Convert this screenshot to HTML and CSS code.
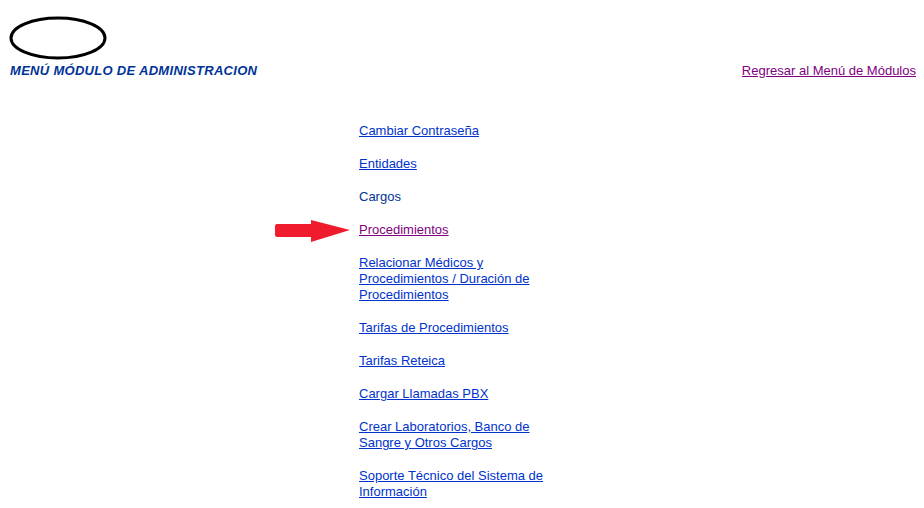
FILE: index.html
```html
<!DOCTYPE html>
<html lang="es">
<head>
    <meta charset="UTF-8">
    <title>Menú Módulo de Administración</title>
    <link rel="stylesheet" href="styles.css">
</head>
<body>
    <div class="header">
        <div class="brand">
            <svg class="logo" width="100" height="46" viewBox="0 0 100 46">
                <ellipse cx="49" cy="22" rx="47" ry="20" fill="none" stroke="#000" stroke-width="3"/>
            </svg>
            <div class="title">MENÚ MÓDULO DE ADMINISTRACION</div>
        </div>
        <a class="back visited" href="#">Regresar al Menú de Módulos</a>
    </div>
    <div class="menu">
        <a class="item" href="#">Cambiar Contraseña</a>
        <a class="item" href="#">Entidades</a>
        <span class="item plain">Cargos</span>
        <div class="current">
            <svg class="arrow" width="76" height="24" viewBox="0 0 76 24">
                <path d="M2 5 L36 5 L36 1 L75 11 L36 23 L36 18 L2 18 Q0 18 0 16 L0 7 Q0 5 2 5 Z" fill="#ee1c2c"/>
            </svg>
            <a class="item visited" href="#">Procedimientos</a>
        </div>
        <a class="item" href="#">Relacionar Médicos y Procedimientos / Duración de Procedimientos</a>
        <a class="item" href="#">Tarifas de Procedimientos</a>
        <a class="item" href="#">Tarifas Reteica</a>
        <a class="item" href="#">Cargar Llamadas PBX</a>
        <a class="item" href="#">Crear Laboratorios, Banco de Sangre y Otros Cargos</a>
        <a class="item" href="#">Soporte Técnico del Sistema de Información</a>
    </div>
</body>
</html>
```

FILE: styles.css
```css
body {
    margin: 8px;
    font-family: "Liberation Sans", Arial, sans-serif;
    font-size: 13px;
    line-height: 16px;
    background-color: #ffffff;
    color: #003399;
}

a {
    color: #0033cc;
}

a.visited {
    color: #800080;
}

.header {
    display: flex;
    justify-content: space-between;
    align-items: flex-end;
}

.brand {
    padding-left: 2px;
}

.logo {
    display: block;
    margin-top: 8px;
    margin-left: -1px;
}

.title {
    font-weight: bold;
    font-style: italic;
    letter-spacing: 0.3px;
    color: #003399;
    margin-top: 1px;
}

.menu {
    display: flex;
    flex-direction: column;
    gap: 17px;
    width: 200px;
    margin-left: 351px;
    margin-top: 44px;
}

.item {
    display: block;
}

.plain {
    color: #003399;
}

.current {
    position: relative;
}

.arrow {
    position: absolute;
    left: -84px;
    top: -3px;
}
```
